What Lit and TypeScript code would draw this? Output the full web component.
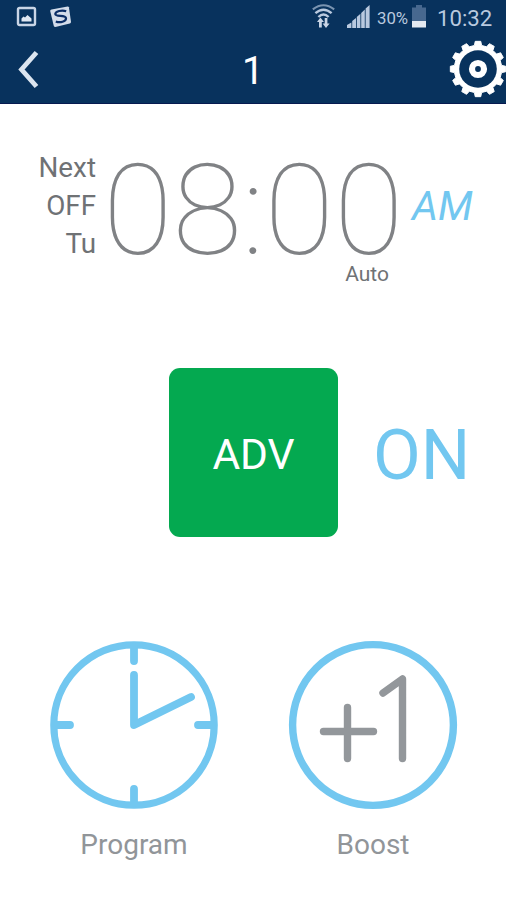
import { LitElement, html, css, svg } from "lit";
import { customElement } from "lit/decorators.js";

/** Outline of a toothed wheel centred on 30,30. */
function gearPath(teeth: number, outer: number, root: number): string {
  const step = (Math.PI * 2) / teeth;
  const pt = (r: number, a: number) =>
    `${(30 + r * Math.sin(a)).toFixed(2)} ${(30 - r * Math.cos(a)).toFixed(2)}`;
  let d = "";
  for (let i = 0; i < teeth; i++) {
    const a = i * step;
    d += `${i ? "L" : "M"}${pt(root, a - step * 0.29)}L${pt(outer, a - step * 0.19)}`;
    d += `L${pt(outer, a + step * 0.19)}L${pt(root, a + step * 0.29)}`;
  }
  return d + "Z";
}

@customElement("status-bar")
class StatusBar extends LitElement {
  static styles = css`
    :host { display: flex; height: 35px; align-items: flex-start; color: #b9c9df; }
    svg { display: block; flex: none; }
    .picture { margin: 6px 0 0 16px; }
    .app { margin: 5px 0 0 13px; }
    .wifi { margin: 4px 0 0 240px; }
    .signal { margin: 5px 0 0 12px; }
    .percent { margin-left: 7px; width: 32px; font-size: 16.8px; line-height: 36px; white-space: nowrap; }
    .battery { margin: 5px 0 0 2px; }
    .time { margin-left: 10px; font-size: 22.2px; line-height: 36px; white-space: nowrap; }
  `;
  render() {
    return html`
      <svg class="picture" width="21" height="21" viewBox="0 0 21 21">
        <rect x="2" y="2" width="17" height="17" rx="1.5" fill="none" stroke="#c9d5e6" stroke-width="2.4" />
        <path d="M5.5 15.5V12.5L7.5 10.5L9 11.5L11.5 9L15.5 12.5V15.5Z" fill="#dfe7f2" />
      </svg>
      <svg class="app" width="22" height="23" viewBox="0 0 22 23">
        <path d="M1.5 4.6L17.6 1.4Q18.6 1.3 18.9 2.3L21 16.8Q21 18.2 19.8 18.6L5.4 22Q4.2 22 3.8 21L0.2 6Q0.2 5 1.5 4.6Z" fill="#d3dcea" />
        <path d="M16.2 6.2C12 4.7 5 6.2 5.3 9.2C5.6 12.2 15.6 9.6 16 13.2C16.2 16.5 10 18.3 5.8 16.4" fill="none" stroke="#0a2d66" stroke-width="2.2" />
      </svg>
      <svg class="wifi" width="23" height="25" viewBox="0 0 23 25">
        <g fill="none" stroke="#b9c9df" stroke-width="2">
          <path d="M0.8 5.4Q11.5 -3 22.2 5.4" opacity=".65" />
          <path d="M3.4 9.2Q11.5 2.2 19.6 9.2" stroke-width="2.4" />
          <path d="M6.4 13Q11.5 8 16.6 13" stroke-width="2.4" />
        </g>
        <path d="M8.4 13.5L12 18H9.8V23.5H7V18H5ZM14 24L10.6 19.5H12.7V14H15.4V19.5H17.6Z" fill="#c9d5e6" />
      </svg>
      <svg class="signal" width="23" height="24" viewBox="0 0 23 24">
        <path d="M0 20L4.4 17.6V23H0Z M5.2 16L9 13V23H5.2Z M9.8 12L13.4 8.7V23H9.8Z M14.2 8L17.8 4.6V23H14.2Z M18.6 3.6L22.6 0V23H18.6Z" fill="#b9c9df" />
      </svg>
      <span class="percent">30%</span>
      <svg class="battery" width="16" height="24" viewBox="0 0 16 24">
        <path d="M5 0H11V2.5H15V16H1V2.5H5Z" fill="#47688f" />
        <rect x="1" y="16" width="14" height="6.5" fill="#e4eaf2" />
      </svg>
      <span class="time">10:32</span>
    `;
  }
}

@customElement("title-bar")
class TitleBar extends LitElement {
  static styles = css`
    :host { display: grid; grid-template-columns: 60px 1fr 60px; height: 68px; }
    svg { display: block; }
    .back { margin: 14px 0 0 16px; }
    .title { text-align: center; color: #fff; font-size: 39px; line-height: 72px; }
    .gear { margin: 4px 0 0 2px; }
  `;
  render() {
    return html`
      <svg class="back" width="24" height="42" viewBox="0 0 24 42">
        <path d="M20.5 3.5L5.5 20.5L20.5 37.5" fill="none" stroke="#dce5f0" stroke-width="4.8" />
      </svg>
      <div class="title">1</div>
      <svg class="gear" width="58" height="60" viewBox="0 0 58 60">
        <path d=${gearPath(12, 27.8, 23.8)} fill="#fff" stroke="#fff" stroke-width="1" stroke-linejoin="round" />
        <circle cx="30" cy="30" r="18.8" fill="#08325d" />
        <circle cx="30" cy="30" r="6" fill="none" stroke="#fff" stroke-width="6.2" />
      </svg>
    `;
  }
}

@customElement("next-event")
class NextEvent extends LitElement {
  static styles = css`
    :host { display: flex; height: 190px; align-items: flex-start; color: #6f7275; }
    .label { width: 96px; margin-top: 45px; text-align: right; font-size: 27.8px; line-height: 38px; }
    .clock { margin: 43px 0 0 7px; width: 301px; }
    .digits { display: grid; grid-template-columns: 69.5px 69.5px 22.5px 69.5px 69.5px; height: 127px;
      font-size: 127px; line-height: 127px; font-weight: 100; text-align: center; color: #808285; }
    .digits span { display: flex; justify-content: center; }
    .mode { margin: -12px 15px 0 0; text-align: right; font-size: 21px; line-height: 24px; }
    .half { margin: 79px 0 0 8px; font-size: 41px; line-height: 46px; font-style: italic; color: #72c7f0; }
  `;
  render() {
    return html`
      <div class="label"><div>Next</div><div>OFF</div><div>Tu</div></div>
      <div class="clock">
        <div class="digits">${[..."08:00"].map((c) => html`<span>${c}</span>`)}</div>
        <div class="mode">Auto</div>
      </div>
      <div class="half">AM</div>
    `;
  }
}

const clockFace = svg`
  <g fill="none" stroke="#72c7f0" stroke-width="7.8" stroke-linecap="round">
    <circle cx="85" cy="85" r="80.2" stroke-width="7.2" />
    <path d="M85 7V21M85 163V149M7 85H21M163 85H149" />
    <path d="M85 35V85L142 57" stroke-linejoin="round" />
  </g>`;

const plusOne = svg`
  <g fill="none" stroke-linecap="round" stroke-linejoin="round">
    <circle cx="85" cy="85" r="80.4" stroke="#72c7f0" stroke-width="7.4" />
    <path d="M59.5 67.5V118.5M35.5 91.5H85.5M95 53L114.5 39V118.5" stroke="#93979b" stroke-width="7.4" />
  </g>`;

@customElement("app-root")
class AppRoot extends LitElement {
  static styles = css`
    :host { display: block; height: 900px; background: #fff; overflow: hidden;
      font-family: Roboto, "Liberation Sans", sans-serif; }
    .header { height: 104px; box-sizing: border-box; background: #08325d; border-bottom: 1px solid #071a50; }
    .state { display: grid; grid-template: 169px / 169px 169px 1fr; height: 169px; margin-top: 74px; }
    .adv { grid-column: 2; border-radius: 11px; background: #04a950; color: #fff;
      font-size: 42.5px; line-height: 174px; text-align: center; }
    .on { margin-left: 35px; font-size: 69.5px; line-height: 176px; color: #72c7f0; }
    .actions { display: flex; gap: 69px; margin: 103px 0 0 49px; }
    .action { width: 170px; text-align: center; color: #919599; font-size: 28px; }
    .action svg { display: block; }
    .caption { line-height: 36px; margin-top: 17px; }
  `;
  render() {
    return html`
      <div class="header"><status-bar></status-bar><title-bar></title-bar></div>
      <next-event></next-event>
      <div class="state"><div class="adv">ADV</div><div class="on">ON</div></div>
      <div class="actions">
        <div class="action">
          <svg width="170" height="170" viewBox="0 0 170 170">${clockFace}</svg>
          <div class="caption">Program</div>
        </div>
        <div class="action">
          <svg width="170" height="170" viewBox="0 0 170 170">${plusOne}</svg>
          <div class="caption">Boost</div>
        </div>
      </div>
    `;
  }
}
